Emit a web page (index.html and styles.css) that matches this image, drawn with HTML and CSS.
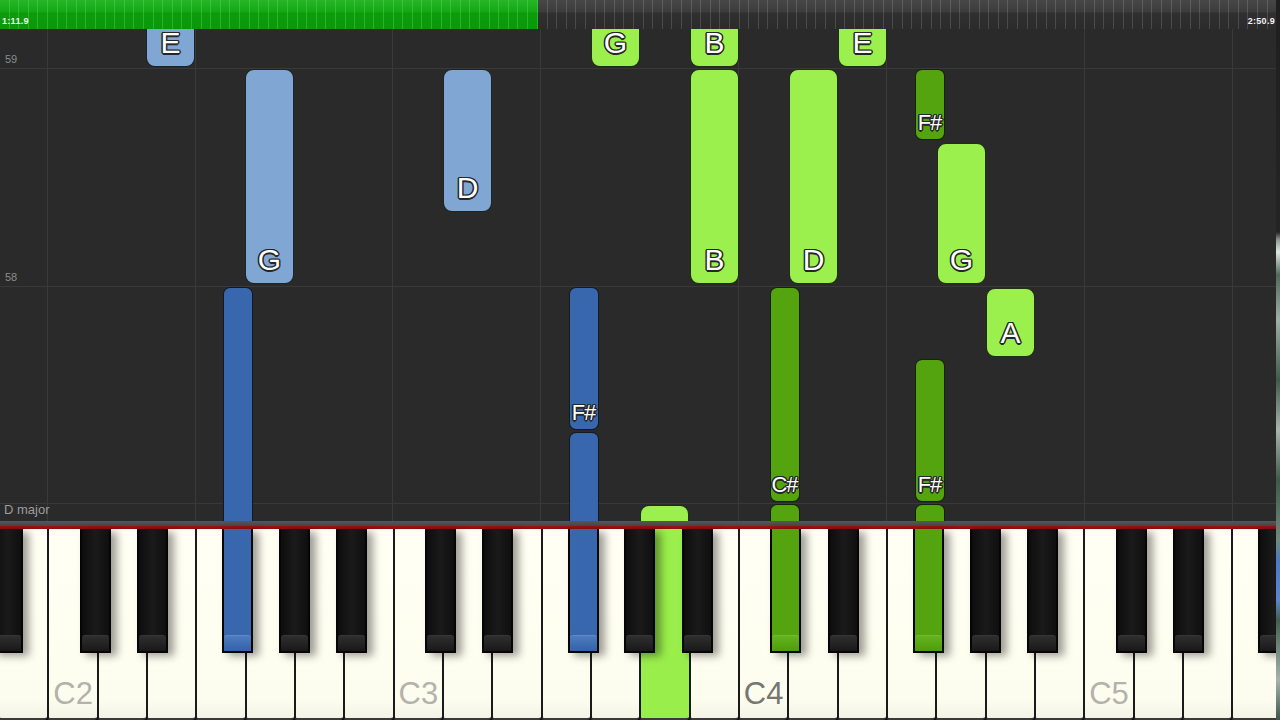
FILE: index.html
```html
<!DOCTYPE html>
<html>
<head>
<meta charset="utf-8">
<link rel="stylesheet" href="styles.css">
</head>
<body>
<div class="screen">
  <div class="app">
    <div class="timeline">
      <div class="done"><span class="time">1:11.9</span></div>
      <div class="todo"><span class="time end">2:50.9</span></div>
    </div>
    <div class="roll">
      <div class="vline" style="left:46.5px"></div>
      <div class="vline" style="left:194.5px"></div>
      <div class="vline" style="left:392px"></div>
      <div class="vline" style="left:540px"></div>
      <div class="vline" style="left:738px"></div>
      <div class="vline" style="left:886px"></div>
      <div class="vline" style="left:1084px"></div>
      <div class="vline" style="left:1232px"></div>
      <div class="hline" style="top:39px"></div>
      <div class="hline" style="top:256.5px"></div>
      <div class="hline" style="top:474px"></div>
      <span class="measure" style="top:24px">59</span>
      <span class="measure" style="top:242px">58</span>
      <span class="key-sig">D major</span>

      <div class="note w lblue cut" style="left:146px;top:0;height:38px"><span>E</span></div>
      <div class="note w lblue" style="left:245px;top:40px;height:215px"><span>G</span></div>
      <div class="note w lblue" style="left:443px;top:40px;height:143px"><span>D</span></div>
      <div class="note s dblue cutb" style="left:223px;top:258px;height:234px"></div>
      <div class="note s dblue" style="left:569px;top:258px;height:143px"><span>F#</span></div>
      <div class="note s dblue cutb" style="left:569px;top:403px;height:89px"></div>

      <div class="note w lgreen cut" style="left:591px;top:0;height:38px"><span>G</span></div>
      <div class="note w lgreen cut" style="left:690px;top:0;height:38px"><span>B</span></div>
      <div class="note w lgreen cut" style="left:838px;top:0;height:38px"><span>E</span></div>
      <div class="note w lgreen" style="left:690px;top:40px;height:215px"><span>B</span></div>
      <div class="note w lgreen" style="left:789px;top:40px;height:215px"><span>D</span></div>
      <div class="note w lgreen" style="left:937px;top:114px;height:141px"><span>G</span></div>
      <div class="note w lgreen" style="left:986px;top:259px;height:69px"><span>A</span></div>
      <div class="note w lgreen cutb" style="left:640px;top:476px;height:16px"></div>

      <div class="note s dgreen" style="left:915px;top:40px;height:71px"><span>F#</span></div>
      <div class="note s dgreen" style="left:770px;top:258px;height:215px"><span>C#</span></div>
      <div class="note s dgreen cutb" style="left:770px;top:475px;height:17px"></div>
      <div class="note s dgreen" style="left:915px;top:330px;height:143px"><span>F#</span></div>
      <div class="note s dgreen cutb" style="left:915px;top:475px;height:17px"></div>
    </div>
    <div class="rail"></div>
    <div class="keyboard">
      <div class="wk"><i class="bk first"></i></div>
      <div class="wk"><i class="bk cs"></i><span class="klabel">C2</span></div>
      <div class="wk"><i class="bk ds"></i></div>
      <div class="wk"></div>
      <div class="wk"><i class="bk fs blue"></i></div>
      <div class="wk"><i class="bk gs"></i></div>
      <div class="wk"><i class="bk as"></i></div>
      <div class="wk"></div>
      <div class="wk"><i class="bk cs"></i><span class="klabel">C3</span></div>
      <div class="wk"><i class="bk ds"></i></div>
      <div class="wk"></div>
      <div class="wk"><i class="bk fs blue"></i></div>
      <div class="wk"><i class="bk gs"></i></div>
      <div class="wk pressed"><i class="bk as"></i></div>
      <div class="wk"></div>
      <div class="wk"><i class="bk cs green"></i><span class="klabel dark">C4</span></div>
      <div class="wk"><i class="bk ds"></i></div>
      <div class="wk"></div>
      <div class="wk"><i class="bk fs green"></i></div>
      <div class="wk"><i class="bk gs"></i></div>
      <div class="wk"><i class="bk as"></i></div>
      <div class="wk"></div>
      <div class="wk"><i class="bk cs"></i><span class="klabel">C5</span></div>
      <div class="wk"><i class="bk ds"></i></div>
      <div class="wk"></div>
      <div class="wk"><i class="bk fs"></i></div>
    </div>
  </div>
  <div class="edge"></div>
</div>
</body>
</html>
```
FILE: styles.css
```css
* { box-sizing: border-box; }
html, body { margin: 0; padding: 0; background: #1e1e1e; }
body { font-family: "Liberation Sans", Arial, sans-serif; }

.screen {
  width: 1280px;
  height: 720px;
  display: flex;
  overflow: hidden;
}
.app {
  width: 1276px;
  height: 720px;
  display: flex;
  flex-direction: column;
  overflow: hidden;
}
.edge {
  width: 4px;
  height: 720px;
  background: linear-gradient(#1f1f1f 0, #242424 232px, #8d9c93 240px, #dfe6e0 252px, #51695c 275px, #9fb0a6 320px, #3f5a4c 380px, #a9b5ae 430px, #3e5a4b 480px, #6d8a7a 540px, #4d79c4 560px, #5b86cf 600px, #41604f 620px, #a6b3ab 680px, #3e5648 720px);
}

/* timeline */
.timeline {
  height: 29px;
  display: flex;
  flex: 0 0 29px;
}
.done {
  width: 538px;
  display: flex;
  align-items: flex-end;
  padding: 0 0 3px 2px;
  background:
    repeating-linear-gradient(90deg, transparent 0 8.6px, rgba(110, 220, 110, 0.35) 8.6px 9.6px),
    linear-gradient(#26b626 0, #14a814 40%, #0b9c0b 45%, #0a980a 100%);
}
.todo {
  flex: 1;
  display: flex;
  align-items: flex-end;
  justify-content: flex-end;
  padding: 0 1px 3px 0;
  background:
    repeating-linear-gradient(90deg, transparent 0 8.6px, rgba(255, 255, 255, 0.14) 8.6px 9.6px),
    linear-gradient(#474747 0, #3c3c3c 40%, #303030 45%, #2b2b2b 100%);
}
.time {
  color: #f2f2f2;
  font-size: 9px;
  font-weight: bold;
  line-height: 10px;
  letter-spacing: 0.3px;
}

/* piano roll */
.roll {
  position: relative;
  flex: 0 0 492px;
  background: #2a2a2a;
}
.vline {
  position: absolute;
  top: 0;
  bottom: 0;
  width: 1px;
  background: #3a3a3a;
}
.hline {
  position: absolute;
  left: 0;
  right: 0;
  height: 1px;
  background: #393939;
}
.measure {
  position: absolute;
  left: 5px;
  font-size: 11px;
  line-height: 12px;
  color: #8c8c8c;
}
.key-sig {
  position: absolute;
  left: 4px;
  top: 473px;
  font-size: 13px;
  line-height: 15px;
  color: #9c9c9c;
}
.note {
  position: absolute;
  display: flex;
  flex-direction: column;
  justify-content: flex-end;
  align-items: center;
  border: 1.5px solid rgba(10, 14, 8, 0.85);
}
.note.w { width: 49px; border-radius: 9px; padding-bottom: 10px; }
.note.s { width: 30px; border-radius: 7px; padding-bottom: 6px; }
.note.cut { border-top: 0; border-top-left-radius: 0; border-top-right-radius: 0; }
.note.cutb { border-bottom: 0; border-bottom-left-radius: 0; border-bottom-right-radius: 0; }
.lblue { background: #80a6d3; }
.dblue { background: #3867ae; }
.lgreen { background: #9cf04e; }
.dgreen { background: #53a40e; }
.note span {
  color: #fff;
  font-size: 30px;
  line-height: 26px;
  text-shadow:
    -1px -1px 0 #262626, 1px -1px 0 #262626, -1px 1px 0 #262626, 1px 1px 0 #262626,
    0 1.5px 0 #262626, 0 -1.5px 0 #262626, 1.5px 0 0 #262626, -1.5px 0 0 #262626;
}
.note.s span {
  font-size: 22px;
  line-height: 20px;
  letter-spacing: -1px;
  margin-left: -1px;
}

/* rail */
.rail {
  flex: 0 0 8px;
  background: linear-gradient(#575757 0, #464646 62%, #9c1212 62%, #8e0d0d 100%);
}

/* keyboard */
.keyboard {
  flex: 0 0 191px;
  display: flex;
  margin-left: -1.93px;
  background: #111;
}
.wk {
  position: relative;
  flex: 0 0 49.33px;
  height: 191px;
  display: flex;
  flex-direction: column;
  justify-content: flex-end;
  align-items: center;
  padding-bottom: 8px;
  background: linear-gradient(#fffff4, #fdfdef 90%, #f4f4e6);
  border-left: 2px solid #1a1a1a;
  border-bottom: 2px solid #3a3a3a;
  border-radius: 0 0 3px 3px;
}
.wk.pressed {
  background: linear-gradient(#9bef4d, #99ee4b);
}
.klabel {
  font-size: 31px;
  line-height: 32px;
  color: #b3b3ab;
}
.klabel.dark { color: #767672; }

.bk {
  position: absolute;
  top: 0;
  z-index: 2;
  width: 31px;
  height: 124px;
  border: 2px solid #050505;
  border-top: 0;
  background: linear-gradient(90deg, #0d0d0d, #1a1a1a 50%, #0f0f0f);
  box-shadow: 6px 3px 8px rgba(0, 0, 0, 0.38);
}
.bk::after {
  content: "";
  position: absolute;
  left: 0;
  right: 0;
  bottom: 0;
  height: 15px;
  border-top: 1px solid #363636;
  background: linear-gradient(#2e2e2e, #222 60%, #181818);
  border-radius: 3px 3px 0 0;
}
.bk.blue { background: #3867ae; }
.bk.blue::after { border-top-color: #5f89c8; background: linear-gradient(#4f7cc0, #3e6cb2 60%, #3563aa); }
.bk.green { background: #53a40e; }
.bk.green::after { border-top-color: #70bb2e; background: linear-gradient(#64b220, #56a612 60%, #4e9c0c); }

/* black key centre = boundary + offset; element is 31 wide */
.bk.first { left: -8px; }
.bk.cs { left: calc(100% - 17px); }
.bk.ds { left: calc(100% - 9px); }
.bk.fs { left: calc(100% - 22.5px); }
.bk.gs { left: calc(100% - 15px); }
.bk.as { left: calc(100% - 7px); }
```
